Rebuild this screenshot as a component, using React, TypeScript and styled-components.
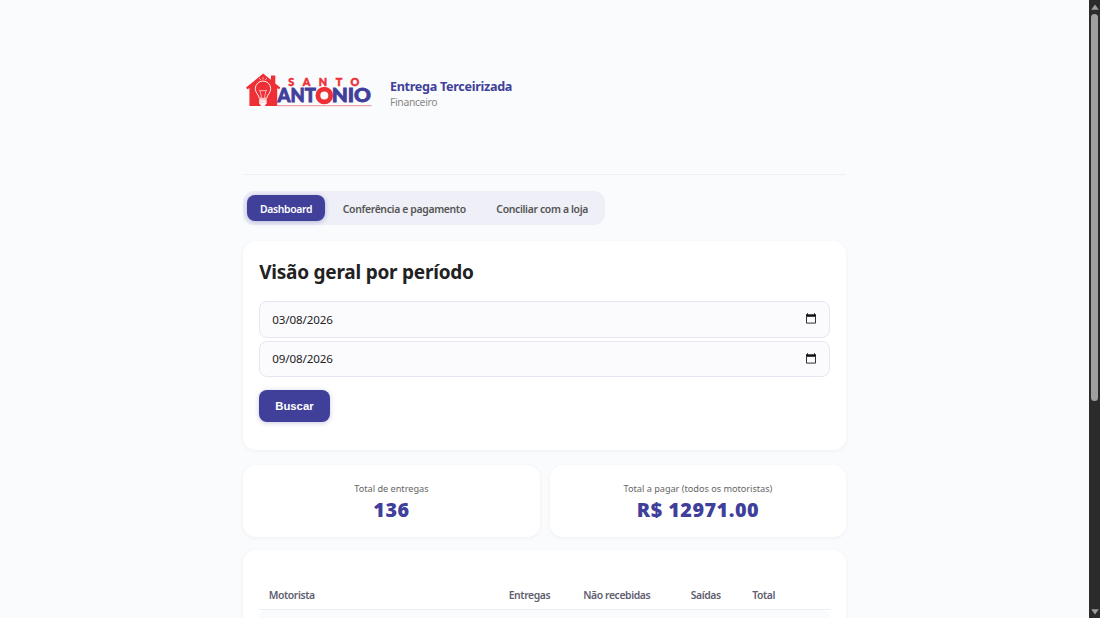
import React, { useState } from 'react';
import { createGlobalStyle, styled } from 'styled-components';

const tabs = ['Dashboard', 'Conferência e pagamento', 'Conciliar com a loja'];

const totals = [
    { label: 'Total de entregas', value: '136' },
    { label: 'Total a pagar (todos os motoristas)', value: 'R$ 12971.00' },
];

const columns = ['Motorista', 'Entregas', 'Não recebidas', 'Saídas', 'Total'];

const Logo = () => (
    <LogoSvg viewBox="0 0 126 36" role="img" aria-label="Santo Antonio">
        <path
            d="M17.2.5 0 14.6l1.3 1.6 2.1-1V33h27.8V15.3l2 .9 1.1-1.6-5-4V2.5h-4.4v4.3z"
            fill="#ee3036"
        />
        <path
            d="M13.3 25.3c-.3-3.2-4-5.6-4-9.6a7.7 7.7 0 0 1 15.4 0c0 4-3.7 6.4-4 9.6z"
            fill="none"
            stroke="#fff"
            strokeWidth="0.9"
        />
        <path
            d="M15.4 25c-.1-3.4-1.3-6.3-1.8-8.1 1 1.5 1.8 1.4 2.2.1.5 1.4 1.8 1.4 2.3 0 .5 1.3 1.5 1.4 2.3-.1-.5 1.8-1.7 4.7-1.8 8.1M13 5l2 2M17 4.3v2.3M21 5l-2 2"
            fill="none"
            stroke="#fff"
            strokeWidth="0.6"
        />
        <path d="M13.2 26.3h7.4v3.9L18.6 33h-3.3l-2.1-2.6z" fill="#fff" />
        <path d="m13.2 28.4 7.4-1.2m-7.4 3 7.4-1.2" stroke="#f6a0a2" strokeWidth="0.5" />
        <LogoTop x="42.3" y="13.4" textLength="71">SANTO</LogoTop>
        <LogoName x="31.6" y="28.9" textLength="38.4" lengthAdjust="spacingAndGlyphs">ANT</LogoName>
        <circle cx="78.3" cy="22.5" r="6.4" fill="#fafbfd" stroke="#ee3036" strokeWidth="4.8" />
        <LogoName x="85.7" y="28.9" textLength="39.3" lengthAdjust="spacingAndGlyphs">NIO</LogoName>
        <path d="M31 32.7h94.5" stroke="#ea8088" strokeWidth="0.9" />
    </LogoSvg>
);

const CalendarIcon = () => (
    <IconSvg viewBox="0 0 10 11">
        <path d="M1.5.3v1.5M8.5.3v1.5" stroke="#111" strokeWidth="1" />
        <path d="M0 1.3h10v2.5H0z" fill="#111" />
        <path d="M.5 3v7.1h9V3" fill="none" stroke="#333" />
    </IconSvg>
);

export default function App() {
    const [active, setActive] = useState(0);

    return (
        <>
            <GlobalStyle />
            <Screen>
                <Main>
                    <Header>
                        <Logo />
                        <Brand>
                            <Title>Entrega Terceirizada</Title>
                            <Subtitle>Financeiro</Subtitle>
                        </Brand>
                    </Header>

                    <Tabs>
                        {tabs.map((tab, i) => (
                            <Tab key={tab} $active={i === active} onClick={() => setActive(i)}>{tab}</Tab>
                        ))}
                    </Tabs>

                    <PeriodCard>
                        <Heading>Visão geral por período</Heading>
                        <DateField>03/08/2026<CalendarIcon /></DateField>
                        <DateField>09/08/2026<CalendarIcon /></DateField>
                        <SearchButton>Buscar</SearchButton>
                    </PeriodCard>

                    <Totals>
                        {totals.map((t) => (
                            <TotalCard key={t.label}>
                                <TotalLabel>{t.label}</TotalLabel>
                                <TotalValue>{t.value}</TotalValue>
                            </TotalCard>
                        ))}
                    </Totals>

                    <TableCard>
                        <TableHead>
                            {columns.map((c) => <span key={c}>{c}</span>)}
                        </TableHead>
                        <TableRow />
                    </TableCard>
                </Main>
                <Scrollbar>
                    <Arrow viewBox="0 0 8 6"><path d="M4 .5 7.8 5.8H.2z" /></Arrow>
                    <Thumb />
                    <Arrow viewBox="0 0 8 6"><path d="M4 5.5.2.2h7.6z" /></Arrow>
                </Scrollbar>
            </Screen>
        </>
    );
}

const GlobalStyle = createGlobalStyle`
* {
    box-sizing: border-box;
}
body {
    margin: 0;
    overflow: hidden;
    background: #fafbfd;
    font-family: "Noto Sans", "Open Sans", sans-serif;
}
`

const Screen = styled.div`
display: flex;
height: 618px;
overflow: hidden;
`

const Main = styled.main`
flex: 1;
display: flex;
flex-direction: column;
align-items: stretch;
padding: 0 242.8px 0 243.2px;
overflow: hidden;
`

const Header = styled.header`
display: flex;
flex-shrink: 0;
align-items: center;
gap: 18px;
height: 175px;
padding: 8px 0 0 2.8px;
border-bottom: 1px solid #eeeff3;
`

const LogoSvg = styled.svg`
width: 126px;
height: 36px;
overflow: visible;
font-family: Lato, sans-serif;
font-weight: 900;
`

const LogoTop = styled.text`
font-size: 10.8px;
fill: #ee3036;
stroke: #ee3036;
stroke-width: 0.5px;
`

const LogoName = styled.text`
font-size: 18.8px;
fill: #40409a;
stroke: #40409a;
stroke-width: 0.8px;
`

const Brand = styled.div`
padding-top: 5px;
`

const Title = styled.div`
font-size: 12.6px;
font-weight: 700;
line-height: 17px;
letter-spacing: -0.3px;
color: #40409a;
`

const Subtitle = styled.div`
font-size: 10.4px;
line-height: 14px;
letter-spacing: -0.35px;
color: #888;
`

const Tabs = styled.nav`
display: flex;
flex-shrink: 0;
align-self: flex-start;
gap: 5px;
width: 362px;
height: 34px;
margin-top: 16px;
padding: 4px;
border-radius: 11px;
background: #eeeff7;
`

const Tab = styled.button<{ $active: boolean }>`
padding: 2px 12.8px 0;
border: 0;
border-radius: 8px;
font-family: inherit;
font-size: 10.4px;
font-weight: 600;
letter-spacing: -0.34px;
white-space: nowrap;
color: ${(p) => (p.$active ? '#fff' : '#555')};
background: ${(p) => (p.$active ? '#40409a' : 'transparent')};
box-shadow: ${(p) => (p.$active ? '0 1px 5px rgba(64, 64, 154, 0.35)' : 'none')};
`

const Card = styled.section`
flex-shrink: 0;
border-radius: 13px;
background: #fff;
box-shadow: 0 1px 4px rgba(50, 50, 100, 0.06);
`

const PeriodCard = styled(Card)`
height: 208.5px;
margin-top: 16px;
padding: 17px 16px 0;
`

const Heading = styled.h1`
margin: 0 0 15px;
font-size: 19px;
font-weight: 700;
line-height: 28px;
letter-spacing: -0.23px;
color: #222;
`

const DateField = styled.div`
display: flex;
align-items: center;
justify-content: space-between;
height: 36.5px;
margin-bottom: 3px;
padding: 0 13.5px 0 12px;
border: 1px solid #e6e6f2;
border-radius: 8px;
font-size: 11.6px;
letter-spacing: -0.1px;
color: #222;
background: #fbfbfe;
`

const IconSvg = styled.svg`
width: 10px;
height: 11px;
margin-bottom: 1px;
`

const SearchButton = styled.button`
width: 70.5px;
height: 32px;
margin-top: 10px;
padding: 0;
border: 0;
border-radius: 8px;
font-family: "Liberation Sans", Arial, sans-serif;
font-size: 11.3px;
font-weight: 700;
color: #fff;
background: #40409a;
box-shadow: 0 1px 5px rgba(64, 64, 154, 0.28);
`

const Totals = styled.div`
display: grid;
flex-shrink: 0;
grid-template-columns: 1fr 1fr;
gap: 10px;
margin-top: 15.5px;
`

const TotalCard = styled(Card)`
height: 72px;
padding-top: 17px;
text-align: center;
`

const TotalLabel = styled.div`
font-size: 9.2px;
line-height: 14px;
letter-spacing: -0.03px;
color: #666;
`

const TotalValue = styled.div`
font-size: 19.8px;
font-weight: 900;
line-height: 28px;
letter-spacing: 0.5px;
color: #40409a;
`

const TableCard = styled(Card)`
height: 100px;
margin-top: 13px;
padding: 31.5px 16px 0;
`

const TableHead = styled.div`
display: grid;
grid-template-columns: 240px 74.5px 107.5px 61.5px 1fr;
align-items: center;
height: 28px;
padding: 0 0 1px 9.5px;
border-bottom: 1px solid #ecedf2;
font-size: 10.4px;
font-weight: 600;
letter-spacing: -0.4px;
color: #5f6070;
`

const TableRow = styled.div`
height: 32px;
border-radius: 8px;
background: #fafbfd;
`

const Scrollbar = styled.aside`
display: flex;
flex-direction: column;
align-items: center;
width: 11px;
padding: 4px 0 3px;
background: #2b2b2b;
`

const Arrow = styled.svg`
width: 8px;
height: 6px;
fill: #9f9f9f;
`

const Thumb = styled.div`
width: 7px;
height: 387px;
margin: 4px 0 auto;
border-radius: 4px;
background: #9f9f9f;
`
